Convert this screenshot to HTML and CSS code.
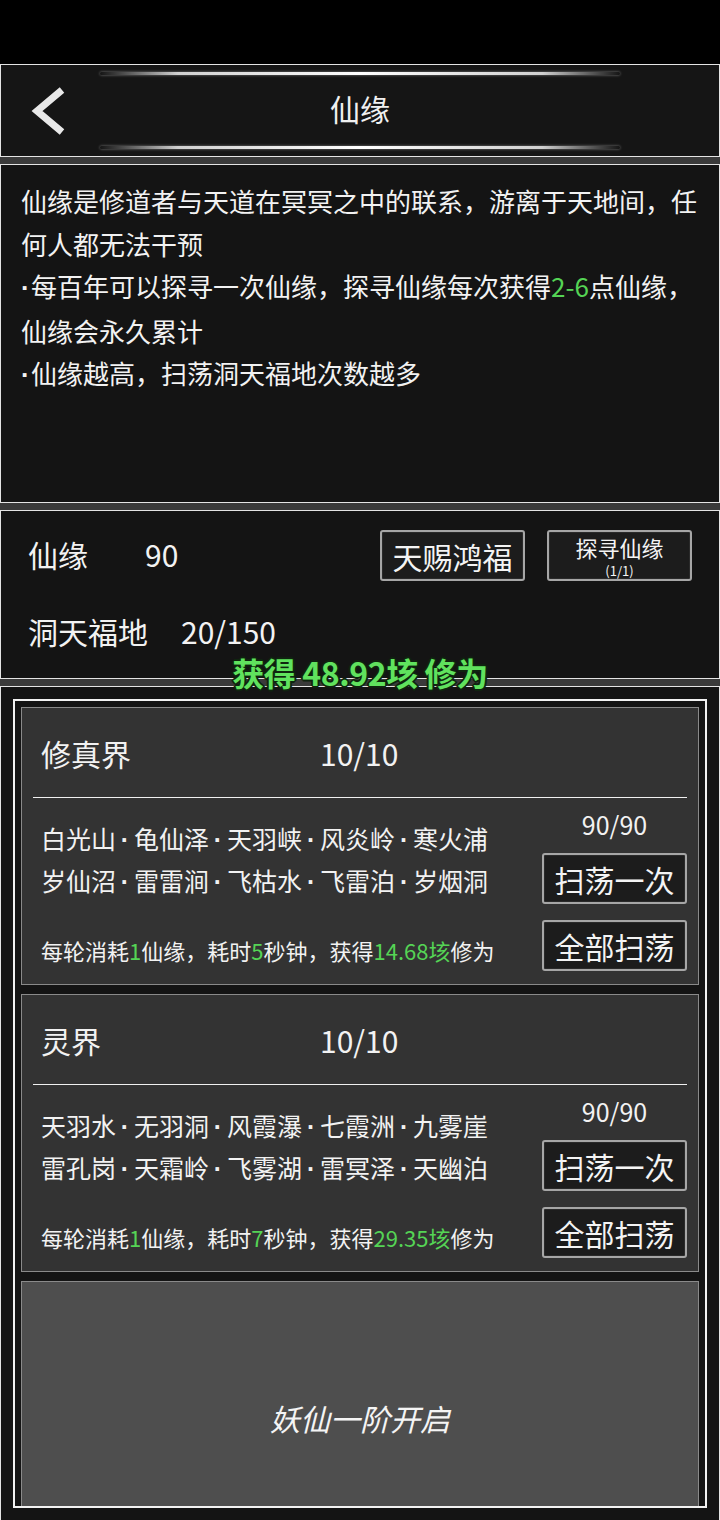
FILE: index.html
```html
<!DOCTYPE html>
<html lang="zh-CN">
<head>
<meta charset="utf-8">
<title>仙缘</title>
<link rel="stylesheet" href="styles.css">
</head>
<body>
<div class="app">
  <div class="status"></div>
  <div class="screen">
    <header class="panel header">
      <div class="glow"></div>
      <div class="titlebar">
        <div class="back">
          <svg width="36" height="50" viewBox="0 0 36 50"><polyline points="32,4 7,25 32,46" fill="none" stroke="#e8e8e8" stroke-width="7" stroke-linejoin="miter"/></svg>
        </div>
        <div class="title">仙缘</div>
        <div></div>
      </div>
      <div class="glow"></div>
    </header>

    <section class="panel desc">
      <p class="desc-p">仙缘是修道者与天道在冥冥之中的联系，游离于天地间，任<br>何人都无法干预</p>
      <p class="desc-p"><span class="dot">·</span>每百年可以探寻一次仙缘，探寻仙缘每次获得<span class="green">2-6</span>点仙缘，<br>仙缘会永久累计</p>
      <p class="desc-p"><span class="dot">·</span>仙缘越高，扫荡洞天福地次数越多</p>
    </section>

    <section class="panel stats">
      <div class="stat-row">
        <span class="stat-label">仙缘</span>
        <span class="stat-val val-a">90</span>
        <div class="stat-actions">
          <div class="btn">天赐鸿福</div>
          <div class="btn btn-seek"><span class="seek-main">探寻仙缘</span><span class="seek-sub">(1/1)</span></div>
        </div>
      </div>
      <div class="stat-row stat-row2">
        <span class="stat-label">洞天福地</span>
        <span class="stat-val val-b">20/150</span>
      </div>
    </section>

    <section class="panel main">
      <div class="frame">
        <div class="card">
          <div class="card-head"><span class="realm-name">修真界</span><span class="realm-count">10/10</span></div>
          <div class="card-rule"></div>
          <div class="card-body">
            <div class="card-left">
              <p class="place-line">白光山<span class="sep">·</span>龟仙泽<span class="sep">·</span>天羽峡<span class="sep">·</span>风炎岭<span class="sep">·</span>寒火浦</p>
              <p class="place-line">岁仙沼<span class="sep">·</span>雷雷涧<span class="sep">·</span>飞枯水<span class="sep">·</span>飞雷泊<span class="sep">·</span>岁烟洞</p>
              <p class="cost">每轮消耗<span class="green">1</span>仙缘，耗时<span class="green">5</span>秒钟，获得<span class="green">14.68垓</span>修为</p>
            </div>
            <div class="card-right">
              <div class="quota">90/90</div>
              <div class="btn">扫荡一次</div>
              <div class="btn btn-second">全部扫荡</div>
            </div>
          </div>
        </div>

        <div class="card">
          <div class="card-head"><span class="realm-name">灵界</span><span class="realm-count">10/10</span></div>
          <div class="card-rule"></div>
          <div class="card-body">
            <div class="card-left">
              <p class="place-line">天羽水<span class="sep">·</span>无羽洞<span class="sep">·</span>风霞瀑<span class="sep">·</span>七霞洲<span class="sep">·</span>九雾崖</p>
              <p class="place-line">雷孔岗<span class="sep">·</span>天霜岭<span class="sep">·</span>飞雾湖<span class="sep">·</span>雷冥泽<span class="sep">·</span>天幽泊</p>
              <p class="cost">每轮消耗<span class="green">1</span>仙缘，耗时<span class="green">7</span>秒钟，获得<span class="green">29.35垓</span>修为</p>
            </div>
            <div class="card-right">
              <div class="quota">90/90</div>
              <div class="btn">扫荡一次</div>
              <div class="btn btn-second">全部扫荡</div>
            </div>
          </div>
        </div>

        <div class="card card-locked">
          <span class="locked-text">妖仙一阶开启</span>
        </div>
      </div>
    </section>
  </div>

  <div class="toast">获得 48.92垓 修为</div>
</div>
</body>
</html>
```

FILE: styles.css
```css
* { box-sizing: border-box; }
html, body { margin: 0; padding: 0; }
body {
  width: 720px;
  height: 1520px;
  overflow: hidden;
  background: #000;
  font-family: "Noto Sans CJK SC", "Noto Sans", sans-serif;
  color: #f2f2f2;
}
p { margin: 0; }

.app {
  position: relative;
  height: 1520px;
  display: flex;
  flex-direction: column;
}
.status { height: 64px; flex: none; background: #000; }
.screen {
  flex: 1;
  min-height: 0;
  display: flex;
  flex-direction: column;
  gap: 7px;
  background: #3a3a3a;
}
.panel {
  flex: none;
  border: 1px solid #e4e4e4;
  background: #141414;
}

/* header */
.header {
  height: 93px;
  padding: 7px 0;
  display: flex;
  flex-direction: column;
  background: #151515;
}
.glow {
  height: 3px;
  width: 520px;
  margin: 0 auto;
  border-radius: 2px;
  background: linear-gradient(90deg, rgba(255,255,255,0) 0%, rgba(255,255,255,0.8) 15%, #fff 50%, rgba(255,255,255,0.8) 85%, rgba(255,255,255,0) 100%);
  box-shadow: 0 0 3px rgba(255,255,255,0.45);
}
.titlebar {
  flex: 1;
  display: grid;
  grid-template-columns: 1fr auto 1fr;
  align-items: center;
}
.back { display: flex; padding-left: 29px; }
.title { font-size: 30px; line-height: 1; color: #f0f0f0; margin-top: -5px; }

/* description */
.desc {
  height: 339px;
  padding: 15px 10px 0 20px;
  font-size: 26px;
  line-height: 42.5px;
  white-space: nowrap;
}
.dot {
  display: inline-block;
  width: 10px;
  text-align: left;
  font-family: "Liberation Sans", sans-serif;
  font-weight: bold;
}
.green { color: #55d455; }

/* stats */
.stats {
  height: 169px;
  padding: 19px 27px 0 27px;
}
.stat-row {
  height: 51px;
  display: flex;
  align-items: center;
  font-size: 30px;
}
.stat-label, .stat-val { margin-top: -4px; }
.stat-row2 { margin-top: 32px; height: 40px; }
.val-a { margin-left: 57px; }
.val-b { margin-left: 33px; }
.stat-actions {
  margin-left: auto;
  display: flex;
  gap: 22px;
}

.btn {
  width: 145px;
  height: 51px;
  border: 2px solid #a6a6a6;
  border-radius: 3px;
  background: #1c1c1c;
  box-shadow: inset 0 0 0 1px #2a2a2a;
  display: flex;
  align-items: center;
  justify-content: center;
  font-size: 30px;
  line-height: 1;
  color: #f4f4f4;
}
.btn-seek {
  flex-direction: column;
  justify-content: flex-start;
}
.seek-main { display: block; font-size: 22px; line-height: 30px; }
.seek-sub { display: block; font-size: 13px; line-height: 17px; }

/* main list */
.main {
  flex: 1;
  min-height: 0;
  overflow: hidden;
  padding: 12px 12px 0 12px;
  border-bottom: none;
}
.frame {
  height: 809px;
  border: 2px solid #f2f2f2;
  padding: 6px 6px 0 6px;
  overflow: hidden;
  display: flex;
  flex-direction: column;
  gap: 9px;
}
.card {
  flex: none;
  height: 278px;
  border: 1px solid #8a8a8a;
  background: #333333;
}
.card-head {
  height: 89px;
  padding: 0 0 0 19px;
  display: flex;
  align-items: center;
  font-size: 30px;
}
.realm-name { width: 279px; }
.card-rule { height: 1px; margin: 0 11px; background: #f0f0f0; }
.card-body {
  height: 186px;
  display: flex;
  padding: 0 11px 0 19px;
}
.card-left { flex: 1; padding-top: 20px; }
.place-line {
  font-size: 25px;
  line-height: 40px;
  white-space: nowrap;
}
.sep {
  display: inline-block;
  width: 18px;
  text-align: center;
  font-family: "Liberation Sans", sans-serif;
  font-weight: bold;
}
.cost {
  margin-top: 33px;
  font-size: 22px;
  line-height: 30px;
  white-space: nowrap;
}
.card-right {
  width: 145px;
  padding-top: 11px;
  display: flex;
  flex-direction: column;
}
.quota { font-size: 25px; line-height: 30px; text-align: center; }
.card-right .btn { margin-top: 14px; }
.card-right .btn-second { margin-top: 16px; }

.card-locked {
  background: #4e4e4e;
  display: flex;
  align-items: center;
  justify-content: center;
}
.locked-text { font-size: 30px; font-style: italic; color: #f4f4f4; margin-top: -4px; }

/* floating reward toast */
.toast {
  position: absolute;
  top: 653px;
  left: 0;
  right: 0;
  text-align: center;
  font-size: 32px;
  line-height: 38px;
  font-weight: bold;
  color: #60e25e;
  letter-spacing: -0.4px;
  text-shadow: -2px 0 #0f240f, 2px 0 #0f240f, 0 -2px #0f240f, 0 2px #0f240f, -1px -1px #0f240f, 1px 1px #0f240f, -1px 1px #0f240f, 1px -1px #0f240f;
}
```
